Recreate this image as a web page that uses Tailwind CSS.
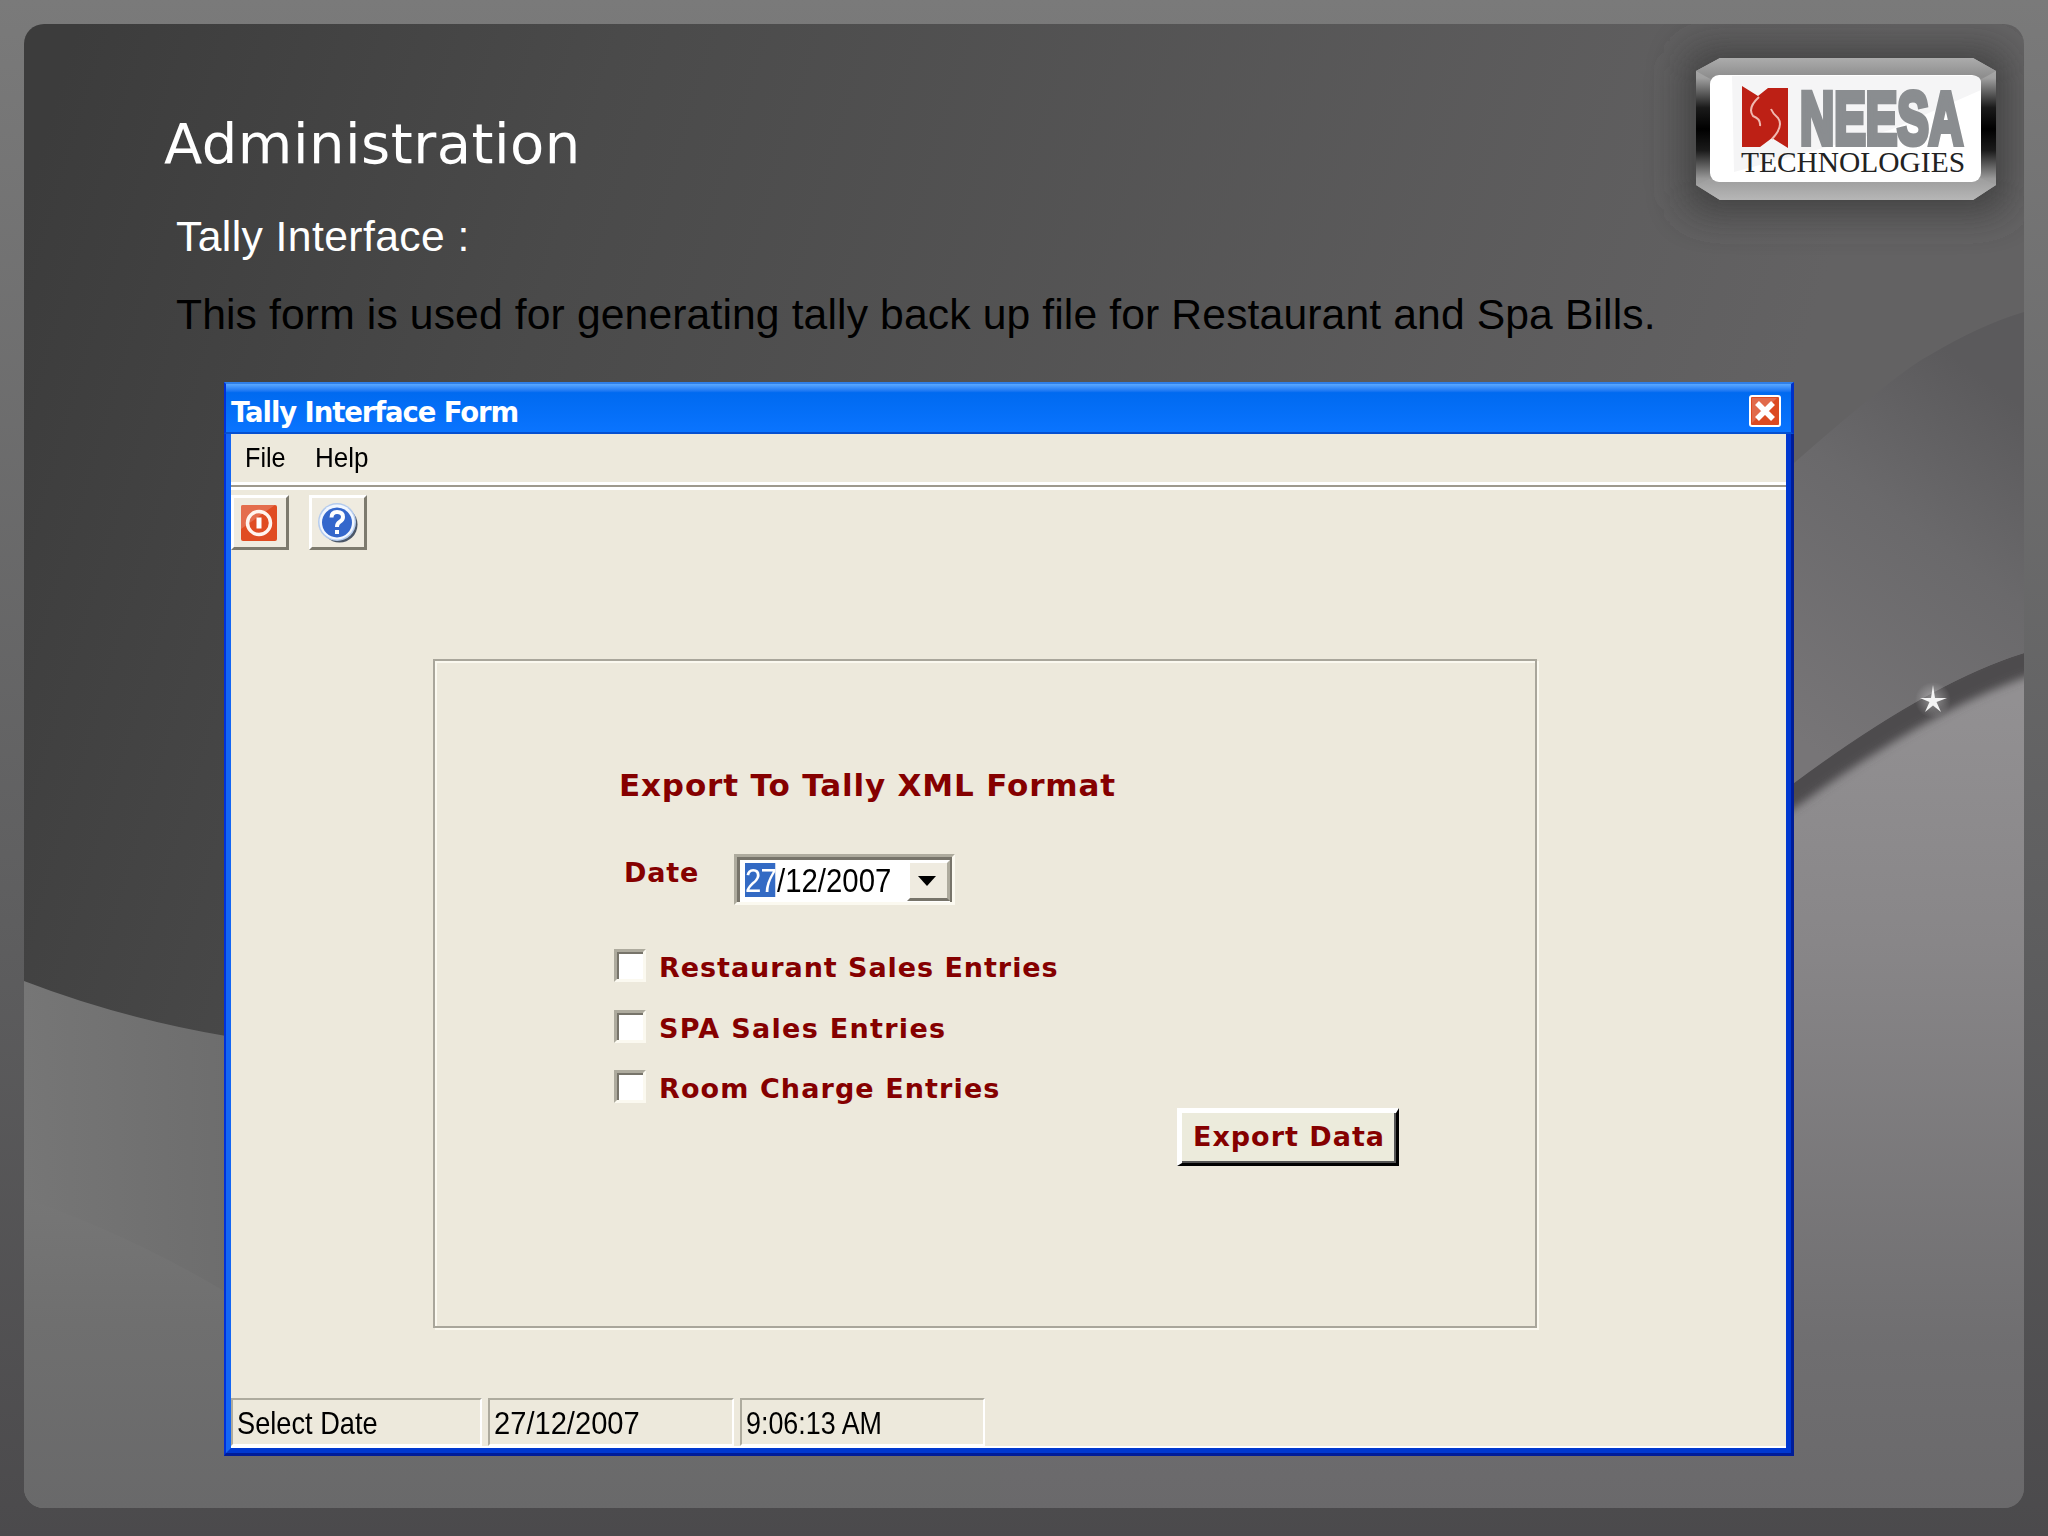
<!DOCTYPE html>
<html lang="en">
<head>
    <meta charset="UTF-8">
    <title>Administration - Tally Interface</title>
    <meta name="viewport" content="width=device-width, initial-scale=1.0">
    <script src="https://cdn.jsdelivr.net/npm/@tailwindcss/browser@4"></script>
</head>

<body class="w-[2048px] h-[1536px] overflow-hidden p-6 bg-linear-to-b from-[#7a7a7a] via-[#5e5e5f] via-60% to-[#4b4a4c]">

    <main class="relative w-[2000px] h-[1484px] rounded-[20px] overflow-hidden">

        <!-- slide background -->
        <svg class="absolute inset-0 w-full h-full" viewBox="24 24 2000 1484">
            <defs>
                <linearGradient id="dark" gradientUnits="userSpaceOnUse" x1="24" y1="200" x2="1700" y2="700">
                    <stop offset="0" stop-color="#3c3c3c"></stop>
                    <stop offset="0.3" stop-color="#4a4a4a"></stop>
                    <stop offset="1" stop-color="#636263"></stop>
                </linearGradient>
                <linearGradient id="mid" gradientUnits="userSpaceOnUse" x1="1800" y1="740" x2="2040" y2="420">
                    <stop offset="0" stop-color="#777577"></stop>
                    <stop offset="0.6" stop-color="#6a696b"></stop>
                    <stop offset="1" stop-color="#5b5a5c"></stop>
                </linearGradient>
                <linearGradient id="left" gradientUnits="userSpaceOnUse" x1="24" y1="0" x2="400" y2="0">
                    <stop offset="0" stop-color="#767676"></stop>
                    <stop offset="1" stop-color="#666666"></stop>
                </linearGradient>
                <linearGradient id="low" gradientUnits="userSpaceOnUse" x1="0" y1="700" x2="0" y2="1508">
                    <stop offset="0" stop-color="#929092"></stop>
                    <stop offset="0.3" stop-color="#888688"></stop>
                    <stop offset="0.8" stop-color="#6f6e70"></stop>
                    <stop offset="1" stop-color="#6a696b"></stop>
                </linearGradient>
                <linearGradient id="lowleft" gradientUnits="userSpaceOnUse" x1="0" y1="1200" x2="0" y2="1508">
                    <stop offset="0" stop-color="#767676"></stop>
                    <stop offset="0.4" stop-color="#6f6f6f"></stop>
                    <stop offset="1" stop-color="#69696a"></stop>
                </linearGradient>
                <radialGradient id="spark">
                    <stop offset="0" stop-color="#ffffff" stop-opacity="0.4"></stop>
                    <stop offset="1" stop-color="#ffffff" stop-opacity="0"></stop>
                </radialGradient>
                <filter id="soft" x="-10%" y="-10%" width="120%" height="120%"><feGaussianBlur stdDeviation="4"></feGaussianBlur></filter>
                <clipPath id="under"><path d="M1500 1010 Q1660 870 1794 783 Q1930 682 2024 653 V1508 H1500Z"></path></clipPath>
            </defs>
            <rect x="24" y="24" width="2000" height="1484" fill="url(#dark)"></rect>
            <path d="M1700 530 Q1750 500 1794 463 Q1900 370 1930 355 Q1980 325 2024 312 V900 H1700Z" fill="url(#mid)"></path>
            <path d="M24 981 Q120 1018 226 1036 H400 V1508 H24Z" fill="url(#left)"></path>
            <path d="M24 1198 Q130 1235 224 1291 L1000 1400 V1508 H24Z" fill="url(#lowleft)"></path>
            <path d="M1000 1430 Q1500 1010 1794 783 Q1930 682 2024 653 V1508 H1000Z" fill="url(#low)"></path>
            <g clip-path="url(#under)">
                <path d="M1500 1015 Q1660 880 1794 789 Q1930 690 2040 655" fill="none" stroke="#4d4b4e" stroke-width="32" filter="url(#soft)"></path>
            </g>
            <circle cx="1933" cy="700" r="18" fill="url(#spark)"></circle>
            <path d="M1933 685 L1935 698 L1947 698 L1936.500 702 L1941 712 L1933 705.500 L1925 712 L1929.500 702 L1920 698 L1931 698Z" fill="#f4f4f4"></path>
        </svg>

        <div class="relative flex flex-col h-full">

            <header class="flex justify-between h-[340px]">
                <div class="pl-[140px] pt-[85px] whitespace-nowrap">
                    <h1 class="font-['DejaVu_Sans',sans-serif] text-[56px] leading-[70px] tracking-[0.5px] text-white">Administration</h1>
                    <p class="pl-3 mt-[31px] font-['Liberation_Sans',sans-serif] text-[42.67px] leading-[52px] tracking-[0.4px] text-white">Tally Interface :</p>
                    <p class="pl-3 mt-[26px] font-['Liberation_Sans',sans-serif] text-[42.67px] leading-[52px] tracking-[0.12px] text-black">This form is used for generating tally back up file for Restaurant and Spa Bills.</p>
                </div>
                <!-- company logo -->
                <svg class="mr-[-12px] mt-[-4px] shrink-0 overflow-visible" width="381" height="222" viewBox="1656 20 381 222">
                    <defs>
                        <linearGradient id="metal" x1="0" y1="0" x2="0" y2="1">
                            <stop offset="0" stop-color="#b0b0b0"></stop>
                            <stop offset="0.14" stop-color="#a0a0a0"></stop>
                            <stop offset="0.35" stop-color="#1a1a1a"></stop>
                            <stop offset="0.5" stop-color="#000000"></stop>
                            <stop offset="0.65" stop-color="#1a1a1a"></stop>
                            <stop offset="0.85" stop-color="#999999"></stop>
                            <stop offset="1" stop-color="#b4b4b4"></stop>
                        </linearGradient>
                        <linearGradient id="rim" x1="0" y1="0" x2="0" y2="1">
                            <stop offset="0" stop-color="#acacac"></stop>
                            <stop offset="0.13" stop-color="#8e8e8e"></stop>
                            <stop offset="0.87" stop-color="#a0a0a0"></stop>
                            <stop offset="1" stop-color="#b6b6b6"></stop>
                        </linearGradient>
                        <filter id="glow" x="-30%" y="-60%" width="160%" height="220%"><feGaussianBlur stdDeviation="19"></feGaussianBlur></filter>
                    </defs>
                    <rect x="1686" y="50" width="321" height="162" rx="20" fill="#403f41" filter="url(#glow)"></rect>
                    <path d="M1696 71 L1720 58 H1973 L1996 71 V185 L1973 200 H1720 L1696 185Z" fill="url(#metal)"></path>
                    <path d="M1720 58 H1973 L1996 71 L1980 80 H1712 L1696 71Z M1712 178 H1980 L1996 185 L1973 200 H1720 L1696 185Z" fill="url(#rim)"></path>
                    <rect x="1710" y="75" width="271" height="107" rx="9" fill="#ffffff"></rect>
                    <path d="M1732 76 H1974 Q1981 76 1981 83 V90 L1890 130 L1734 172Z" fill="#f5f5f6"></path>
                    <path d="M1742 86 L1758 96 L1768 88 H1788 V148 L1772 138 L1760 147 H1742Z" fill="#bd2015"></path>
                    <path d="M1759 97 Q1747 108 1753 116 Q1761 119 1760 126 M1771 109 Q1773 114 1778 118 Q1784 126 1772 139" fill="none" stroke="#f0b8b0" stroke-width="2"></path>
                    <text x="1800" y="144" textLength="163" lengthAdjust="spacingAndGlyphs" font-family="Liberation Sans, sans-serif" font-weight="700" font-size="75" fill="#8a8d90" stroke="#8a8d90" stroke-width="6">NEESA</text>
                    <text x="1741" y="172" textLength="224" lengthAdjust="spacingAndGlyphs" font-family="Liberation Serif, serif" font-size="30" fill="#222222">TECHNOLOGIES</text>
                </svg>
            </header>

            <!-- Tally Interface Form window -->
            <section class="ml-[200px] mt-[18px] w-[1570px] h-[1074px] flex flex-col bg-[#ede9dc]">

                <div class="h-[52px] shrink-0 flex items-center justify-between pl-[5px] pr-[9px] bg-linear-to-b from-[#5aa8ff] via-[#006af0] via-18% to-[#0a74ff] border-t-2 border-t-[#2f7fe8] border-b-2 border-b-[#0650d0] border-r-3 border-r-[#0030c8] border-l-2 border-l-[#0030d8]">
                    <span class="pt-[9px] font-['DejaVu_Sans',sans-serif] font-bold text-[27.500px] leading-none tracking-[-1.1px] text-white whitespace-nowrap">Tally Interface Form</span>
                    <svg class="mt-[5px]" width="34" height="34" viewBox="0 0 34 34">
                        <rect x="1" y="1" width="32" height="32" rx="3" fill="#ffffff"></rect>
                        <rect x="3" y="3" width="28" height="28" rx="1" fill="#dc4a22"></rect>
                        <path d="M4 4 H29 L4 29Z" fill="#e2785c" opacity=".7"></path>
                        <path d="M9 9 L25 25 M25 9 L9 25" stroke="#ffffff" stroke-width="5.500"></path>
                    </svg>
                </div>

                <div class="flex-1 flex border-l-2 border-l-[#0030d8] border-r-3 border-r-[#001c98] border-b-3 border-b-[#001c98]">
                <div class="flex-1 flex flex-col border-l-5 border-l-[#1466f4] border-r-5 border-r-[#0038d0] border-b-5 border-b-[#0038d0] font-['Liberation_Sans',sans-serif] text-black">

                    <nav class="h-[48px] flex items-center gap-[31px] pl-[14px] text-[28px] leading-none">
                        <span class="w-[39px] origin-left scale-x-[0.9]">File</span>
                        <span class="w-[56px] origin-left scale-x-[0.93]">Help</span>
                    </nav>
                    <div class="h-[8px] bg-[#9e998d] border-t-3 border-b-3 border-white"></div>

                    <div class="flex gap-5 mt-[5px]">
                        <div class="w-[58px] h-[55px] flex items-center justify-center bg-[#efebe0] border-3 border-t-white border-l-white border-r-[#7d7a6e] border-b-[#7d7a6e]">
                            <svg class="mr-[3px]" width="36" height="36" viewBox="0 0 36 36">
                                <rect width="36" height="36" rx="2" fill="#e04c22"></rect>
                                <path d="M0 2 Q0 0 2 0 H34 L0 24Z" fill="#e6836a" opacity=".6"></path>
                                <circle cx="18" cy="18" r="11.500" fill="none" stroke="#fff4ee" stroke-width="3.500"></circle>
                                <rect x="15.500" y="12.500" width="5" height="11" fill="#ffffff"></rect>
                            </svg>
                        </div>
                        <div class="w-[58px] h-[55px] flex items-center justify-center bg-[#efebe0] border-3 border-t-white border-l-white border-r-[#7d7a6e] border-b-[#7d7a6e]">
                            <svg width="42" height="42" viewBox="0 0 42 42">
                                <circle cx="22.500" cy="22.500" r="18" fill="#4b5768"></circle>
                                <circle cx="20" cy="20" r="19" fill="#b4cbee"></circle>
                                <circle cx="20" cy="20" r="17.500" fill="#f2f7ff"></circle>
                                <circle cx="20" cy="20.500" r="15" fill="#3467cc"></circle>
                                <path d="M14.500 15.500 Q14.500 10 20 10 Q26 10 26 15 Q26 18 22.500 20 Q20 21.500 20 25" fill="none" stroke="#ffffff" stroke-width="4"></path>
                                <rect x="18" y="28" width="4" height="4" fill="#ffffff"></rect>
                            </svg>
                        </div>
                    </div>

                    <!-- group box -->
                    <div class="ml-[202px] mt-[109px] w-[1104px] h-[669px] shrink-0 border-2 border-[#a9a69b] shadow-[2px_2px_0_#fbf9f0,inset_2px_2px_0_#fbf9f0] font-['DejaVu_Sans',sans-serif] font-bold text-[27px] leading-none text-[#850000] whitespace-nowrap">
                        <h2 class="pl-[184px] pt-[106px] text-[31px] leading-[36px] tracking-[0.85px]">Export To Tally XML Format</h2>

                        <div class="flex pl-[189px] mt-[51px]">
                            <label class="w-[110px] pt-[5px] tracking-[0.8px]">Date</label>
                            <div class="w-[221px] h-[51px] bg-white border-t-3 border-l-3 border-[#aeab9e] border-r-3 border-b-3 border-r-[#fbf9f0] border-b-[#fbf9f0]">
                                <div class="h-full flex justify-between border-t-3 border-l-3 border-r-2 border-[#77746a] font-['Liberation_Sans',sans-serif] font-normal text-[33px] text-black">
                                    <div class="w-[160px] pt-[3px] pl-[5px]">
                                        <div class="flex h-[34px] leading-[36px] w-[170px] origin-left scale-x-[0.89]">
                                            <span class="w-[34px] mr-[2px] bg-[#336ac4] text-white tracking-[-1px]">27</span>/12/2007
                                        </div>
                                    </div>
                                    <div class="w-[43px] h-[41px] shrink-0 flex items-center justify-center bg-[#efebe0] border-3 border-t-white border-l-white border-r-[#aeab9e] border-b-[#77746a]">
                                        <svg class="mr-[3px]" width="18" height="10" viewBox="0 0 18 10"><path d="M0 0 H18 L9 10Z" fill="#000000"></path></svg>
                                    </div>
                                </div>
                            </div>
                        </div>

                        <div class="flex flex-col gap-[27.500px] pl-[179px] mt-[44px] tracking-[0.95px]">
                            <label class="flex gap-[13px] h-[33px]">
                                <span class="w-[32px] h-[33px] bg-white border-3 border-t-[#aeab9e] border-l-[#aeab9e] border-r-[#fbf9f0] border-b-[#fbf9f0] shadow-[inset_2px_2px_0_#77746a]"></span>
                                <span class="pt-[5px]">Restaurant Sales Entries</span>
                            </label>
                            <label class="flex gap-[13px] h-[33px]">
                                <span class="w-[32px] h-[33px] bg-white border-3 border-t-[#aeab9e] border-l-[#aeab9e] border-r-[#fbf9f0] border-b-[#fbf9f0] shadow-[inset_2px_2px_0_#77746a]"></span>
                                <span class="pt-[5px] tracking-[1.3px]">SPA Sales Entries</span>
                            </label>
                            <label class="flex gap-[13px] h-[33px]">
                                <span class="w-[32px] h-[33px] bg-white border-3 border-t-[#aeab9e] border-l-[#aeab9e] border-r-[#fbf9f0] border-b-[#fbf9f0] shadow-[inset_2px_2px_0_#77746a]"></span>
                                <span class="pt-[5px] tracking-[1.1px]">Room Charge Entries</span>
                            </label>
                        </div>

                        <button class="block ml-[742px] mt-[5px] w-[222px] h-[58px] pb-1 bg-[#ecebdc] border-t-5 border-l-5 border-white border-r-3 border-b-3 border-r-black border-b-black shadow-[inset_-2px_-2px_0_#555555] tracking-[1px]">Export Data</button>
                    </div>

                    <!-- status bar -->
                    <footer class="flex gap-[6px] mt-auto h-[50px] text-[32px] leading-[46px] whitespace-nowrap border-b-2 border-b-white">
                        <div class="w-[251px] pl-1 border-2 border-t-[#aeab9e] border-l-[#aeab9e] border-r-white border-b-white"><span class="inline-block origin-left scale-x-[0.85]">Select Date</span></div>
                        <div class="w-[246px] pl-1 border-2 border-t-[#aeab9e] border-l-[#aeab9e] border-r-white border-b-white"><span class="inline-block origin-left scale-x-[0.91]">27/12/2007</span></div>
                        <div class="w-[245px] pl-1 border-2 border-t-[#aeab9e] border-l-[#aeab9e] border-r-white border-b-white"><span class="inline-block origin-left scale-x-[0.84]">9:06:13 AM</span></div>
                    </footer>
                </div>
                </div>
            </section>
        </div>
    </main>

</body>
</html>
